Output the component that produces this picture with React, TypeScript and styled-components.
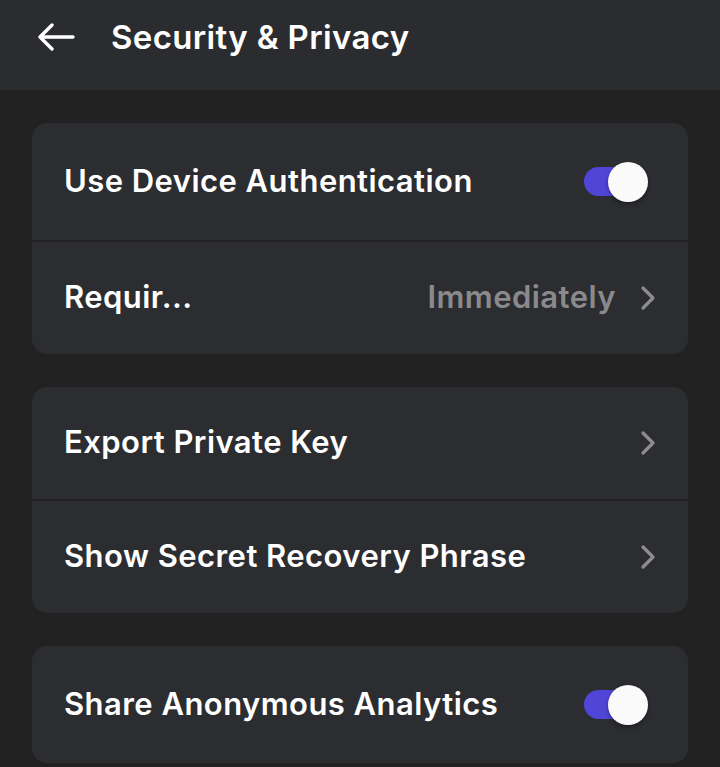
import React, { FC } from 'react';
import styled, { createGlobalStyle } from 'styled-components';

const GlobalStyle = createGlobalStyle`
    html, body {
        margin: 0;
        padding: 0;
        background: #212121;
    }
    body {
        font-family: Inter, "Noto Sans", sans-serif;
        color: #ffffff;
    }
`;

interface SettingsRowProps {
    label: string
    value?: string
    toggle?: boolean
    chevron?: boolean
}

const BackArrow: FC = () => (
    <svg width="38" height="28" viewBox="0 0 38 28" fill="none">
        <path d="M36 14H3M15 2L3 14l12 12" stroke="#fff" strokeWidth="3.4" strokeLinecap="round" strokeLinejoin="round" />
    </svg>
);

const Chevron: FC = () => (
    <svg width="16" height="26" viewBox="0 0 16 26" fill="none">
        <path d="M3 3l10 10L3 23" stroke="#8d8d8f" strokeWidth="3.2" strokeLinecap="round" strokeLinejoin="round" />
    </svg>
);

const SettingsRow: FC<SettingsRowProps> = (props) => {
    const { label, value, toggle, chevron } = props;
    return (
        <Row tall={toggle}>
            <Label>{label}</Label>
            <RowRight>
                {value && <Value>{value}</Value>}
                {toggle && (
                    <Toggle>
                        <Knob />
                    </Toggle>
                )}
                {chevron && <Chevron />}
            </RowRight>
        </Row>
    )
}

const App: FC = () => {
    return (
        <Page>
            <GlobalStyle />
            <Header>
                <BackButton><BackArrow /></BackButton>
                <Title>Security &amp; Privacy</Title>
            </Header>
            <Content>
                <Card>
                    <SettingsRow label="Use Device Authentication" toggle />
                    <Divider />
                    <SettingsRow label="Requir..." value="Immediately" chevron />
                </Card>
                <Card>
                    <SettingsRow label="Export Private Key" chevron />
                    <Divider />
                    <SettingsRow label="Show Secret Recovery Phrase" chevron />
                </Card>
                <Card>
                    <SettingsRow label="Share Anonymous Analytics" toggle />
                </Card>
            </Content>
        </Page>
    )
}

const Page = styled.div`
    min-height: 767px;
    background: #212121;
`;

const Header = styled.div`
    height: 90px;
    background: #2b2c30;
    display: flex;
    align-items: center;
    padding-left: 37px;
    padding-bottom: 17px;
    box-sizing: border-box;
`;

const BackButton = styled.div`
    display: flex;
    align-items: center;
    width: 74px;
`;

const Title = styled.div`
    font-size: 33px;
    font-weight: 600;
    letter-spacing: 0.35px;
`;

const Content = styled.div`
    display: flex;
    flex-direction: column;
    gap: 33px;
    padding: 33px 32px 0;
`;

const Card = styled.div`
    background: #2c2d31;
    border-radius: 15px;
    overflow: hidden;
`;

const Row = styled.div<{ tall?: boolean }>`
    height: ${(p) => (p.tall ? 117 : 112)}px;
    display: flex;
    align-items: center;
    justify-content: space-between;
    padding: 0 32px 0 32px;
    box-sizing: border-box;
`;

const Label = styled.div`
    font-size: 31px;
    font-weight: 600;
    letter-spacing: 0.45px;
    margin-bottom: 3px;
`;

const RowRight = styled.div`
    display: flex;
    align-items: center;
    gap: 24px;
`;

const Value = styled.div`
    font-size: 31px;
    font-weight: 600;
    letter-spacing: 0.45px;
    color: #8a8a8c;
    margin-bottom: 3px;
`;

const Divider = styled.div`
    height: 2px;
    background: #222224;
`;

const Toggle = styled.div`
    position: relative;
    width: 54px;
    height: 29px;
    border-radius: 15px;
    background: #4f46d8;
    margin-right: 18px;
`;

const Knob = styled.div`
    position: absolute;
    top: -5px;
    right: -10px;
    width: 40px;
    height: 40px;
    border-radius: 50%;
    background: #fafafa;
    box-shadow: 0 2px 4px rgba(0, 0, 0, 0.35);
`;

export default App;
